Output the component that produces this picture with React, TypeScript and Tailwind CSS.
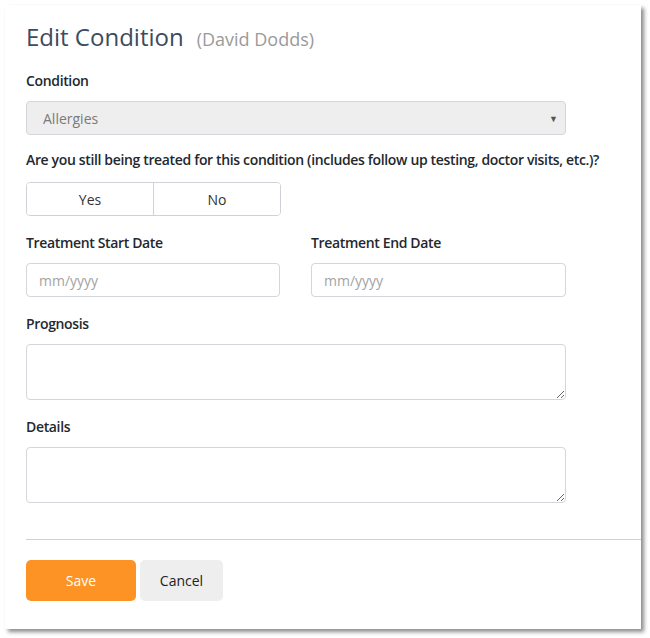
import { useState } from "react";

const Label = ({ children }: { children: React.ReactNode }) => (
  <label className="block whitespace-nowrap text-[14px] font-semibold tracking-[-0.35px] text-[#23282e] leading-5">
    {children}
  </label>
);

export default function App() {
  const [treated, setTreated] = useState<"yes" | "no" | null>(null);

  return (
    <div className="w-[650px] h-[638px] bg-white pt-[5px] pl-[5px] font-['Open_Sans',sans-serif]">
      <div className="w-[636px] h-[624px] bg-white shadow-[3px_3px_4px_rgba(0,0,0,0.45)] flex flex-col">
        <div className="px-[21px] pt-[16px]">
          <h1 className="flex items-baseline gap-[13px]">
            <span className="text-[24px] text-[#3c4b5e] leading-8">Edit Condition</span>
            <span className="text-[18px] text-[#9a9a9a]">(David Dodds)</span>
          </h1>

          <div className="mt-[18px] w-[540px]">
            <Label>Condition</Label>
            <div className="relative mt-[10px]">
              <select
                defaultValue="Allergies"
                className="appearance-none w-full h-[34px] rounded-[4px] border border-[#d3d6da] bg-[#eeeeee] pl-[16px] text-[14px] text-[#7a7a7a] outline-none"
              >
                <option>Allergies</option>
              </select>
              <span className="pointer-events-none absolute right-[8px] top-[11px] text-[9px] text-[#555]">▼</span>
            </div>
          </div>

          <div className="mt-[15px]">
            <Label>Are you still being treated for this condition (includes follow up testing, doctor visits, etc.)?</Label>
            <div className="mt-[12px] flex w-[255px] h-[34px] rounded-[4px] border border-[#cfd2d6] overflow-hidden text-[14px] text-[#333]">
              <button
                onClick={() => setTreated("yes")}
                className={`flex-1 border-r border-[#cfd2d6] ${treated === "yes" ? "bg-[#eee]" : "bg-white"}`}
              >
                Yes
              </button>
              <button
                onClick={() => setTreated("no")}
                className={`flex-1 ${treated === "no" ? "bg-[#eee]" : "bg-white"}`}
              >
                No
              </button>
            </div>
          </div>

          <div className="mt-[17px] flex gap-[31px]">
            <div className="w-[254px]">
              <Label>Treatment Start Date</Label>
              <input
                placeholder="mm/yyyy"
                className="mt-[10px] w-full h-[34px] rounded-[4px] border border-[#d3d6da] px-[12px] text-[14px] placeholder:text-[#a3a3a3] outline-none"
              />
            </div>
            <div className="w-[255px]">
              <Label>Treatment End Date</Label>
              <input
                placeholder="mm/yyyy"
                className="mt-[10px] w-full h-[34px] rounded-[4px] border border-[#d3d6da] px-[12px] text-[14px] placeholder:text-[#a3a3a3] outline-none"
              />
            </div>
          </div>

          <div className="mt-[17px] w-[540px]">
            <Label>Prognosis</Label>
            <textarea className="mt-[10px] block w-full h-[56px] rounded-[4px] border border-[#d3d6da] px-[12px] py-[6px] text-[14px] outline-none" />
          </div>

          <div className="mt-[17px] w-[540px]">
            <Label>Details</Label>
            <textarea className="mt-[10px] block w-full h-[56px] rounded-[4px] border border-[#d3d6da] px-[12px] py-[6px] text-[14px] outline-none" />
          </div>
        </div>

        <div className="ml-[21px] mt-[36px] border-t border-[#d0d0d0]" />

        <div className="px-[21px] pt-[20px] flex gap-[4px]">
          <button className="w-[110px] h-[41px] rounded-[5px] bg-[#fc9324] text-white text-[14px]">Save</button>
          <button className="w-[83px] h-[41px] rounded-[5px] bg-[#eeeeee] text-[#222] text-[14px]">Cancel</button>
        </div>
      </div>
    </div>
  );
}
